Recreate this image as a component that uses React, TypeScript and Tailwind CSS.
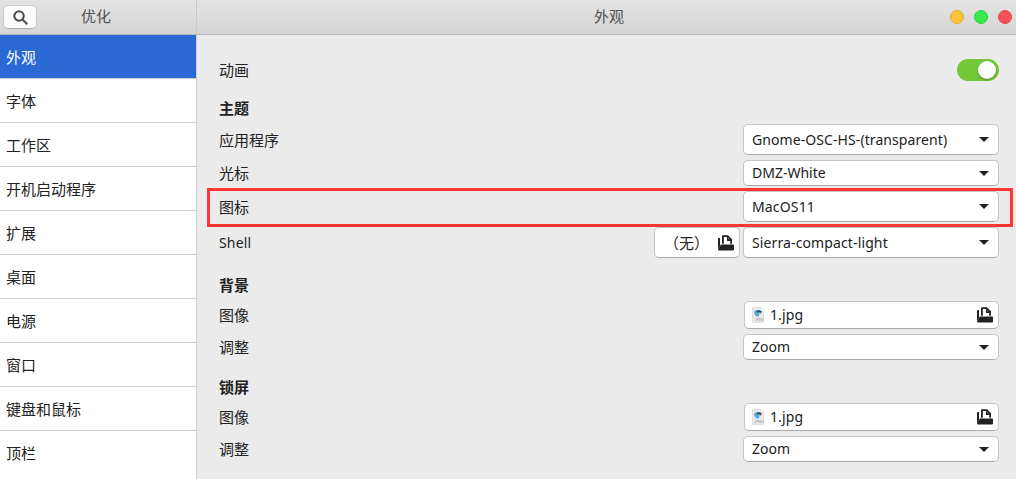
import type { ReactNode } from 'react';

const sidebarItems = ['外观', '字体', '工作区', '开机启动程序', '扩展', '桌面', '电源', '窗口', '键盘和鼠标', '顶栏'];

const boxStyle =
  'flex items-center rounded-[5px] border border-[#c4c4c4] border-b-[#a9a9a9] bg-white leading-none';

function FolderIcon() {
  return (
    <svg className="h-4 w-4 shrink-0" viewBox="0 0 16 16" fill="none">
      <path d="M0 4q0-1 1-1h1v8L0 14Z" fill="#222" />
      <path d="M2.9 9.6h12.3q.8 0 .8.8v4q0 1.1-1.1 1.1H1.1Q0 15.500 0 14.300Z" fill="#222" />
      <path fillRule="evenodd" d="M4 8.800V1.200Q4 .2 5 .2h5l4 4v4.600h-1.800V6H9V2H5.800v6.800Z" fill="#222" />
      <path d="M10 2.200 12 4.300h-2Z" fill="#777" />
    </svg>
  );
}

function JpegIcon() {
  return (
    <svg className="h-4 w-3 shrink-0" viewBox="0 0 12 16">
      <path d="M.5.5h8.7l2.3 2.3v12.7H.5Z" fill="#ebebeb" stroke="#d6d6d6" strokeWidth=".7" />
      <path d="M9 0v3h3" fill="#fff" stroke="#ddd" strokeWidth=".5" />
      <path d="M2 4.5 5 3l4.8 1.4-.5 2.4-2 .5-.7 2.5-2.200-.6-2-2Z" fill="#53a9df" />
      <path d="m4.500 3.700 3.400-.4 2 1.400-1.200 1.200-2.200-.7-1.500.3Z" fill="#234b66" />
      <path d="M6.600 5.500h2v1.200h-2Z" fill="#f1c34e" />
      <text x="2.8" y="13.6" fontSize="3.4" fontWeight="700" fill="#aaa" fontFamily="Liberation Sans, sans-serif">JPEG</text>
    </svg>
  );
}

function Select({ value, height, spacing = '' }: { value: string; height: string; spacing?: string }) {
  return (
    <button className={`${boxStyle} ${height} w-64 justify-between pl-2 pr-[9px] text-left`}>
      <span className={`whitespace-nowrap text-[14px] ${spacing}`}>{value}</span>
      <svg className="h-[5px] w-[10px]" viewBox="0 0 10 5">
        <path d="M0 0h10L5 5Z" fill="#222" />
      </svg>
    </button>
  );
}

function FilePicker() {
  return (
    <button className={`${boxStyle} h-7 w-[255px] pl-[7px] pr-[5px]`}>
      <JpegIcon />
      <span className="ml-[6px] flex-1 text-left text-[14px] tracking-[0.1px]">1.jpg</span>
      <FolderIcon />
    </button>
  );
}

function Row({ label, children, className = '', labelClass = '' }: { label: string; children?: ReactNode; className?: string; labelClass?: string }) {
  return (
    <div className={`flex items-center justify-between ${className}`}>
      <span className={labelClass}>{label}</span>
      {children}
    </div>
  );
}

function Heading({ label, className }: { label: string; className: string }) {
  return <h2 className={`flex h-6 items-center font-bold ${className}`}>{label}</h2>;
}

export default function App() {
  return (
    <div className="flex h-[479px] w-[1016px] flex-col overflow-hidden bg-[#ebebeb] font-['Noto_Sans','Noto_Sans_CJK_SC',sans-serif] text-[15px] leading-none text-[#222]">
      <header className="flex h-[35px] shrink-0 border-b border-[#b5b5b5] bg-linear-to-b from-[#e4e4e4] to-[#d5d5d5] text-[#505050]">
        <div className="flex w-[197px] items-center border-r border-[#cacad0] pl-[3px]">
          <button className="flex h-6 w-[34px] items-center justify-center rounded-[5px] border border-[#c9c9c9] border-b-[#aaa] bg-[#fbfbfb]">
            <svg className="h-[15px] w-[15px]" viewBox="0 0 15 15" fill="none" stroke="#505050" strokeWidth="2.1">
              <circle cx="6" cy="6" r="4.7" />
              <path d="m9.3 9.3 5 5" />
            </svg>
          </button>
          <span className="ml-11 pb-[2px]">优化</span>
        </div>
        <div className="flex flex-1 items-center pr-[4px]">
          <span className="ml-[397px] flex-1 pb-[2px]">外观</span>
          <div className="flex gap-[10px]">
            <i className="h-[14px] w-[14px] rounded-full border border-[#e5ad2d] bg-[#fcc438]" />
            <i className="h-[14px] w-[14px] rounded-full border border-[#2bd33f] bg-[#38ea4c]" />
            <i className="h-[14px] w-[14px] rounded-full border border-[#dc464c] bg-[#f75158]" />
          </div>
        </div>
      </header>
      <div className="flex min-h-0 flex-1">
        <nav className="w-[197px] shrink-0 overflow-hidden border-r border-[#cdcdcd] bg-white">
          {sidebarItems.map((item, index) => (
            <div
              key={item}
              className={`flex h-11 items-center border-b border-[#cfcfcf] pl-[6px] pt-[2px] last:border-white ${index === 0 ? 'bg-[#2a69d3] text-white' : ''}`}
            >
              {item}
            </div>
          ))}
        </nav>
        <main className="relative flex-1 pl-[22px] pr-[17px] pt-[23px]">
          <Row label="动画" className="h-6">
            <div className="flex h-[22px] w-[42px] items-center justify-end rounded-full bg-[#72c837] pr-[3px]">
              <i className="h-[18px] w-[18px] rounded-full bg-white shadow-[0_1px_2px_rgba(0,0,0,0.35)]" />
            </div>
          </Row>
          <Heading label="主题" className="mt-[14px]" />
          <div className="mt-1 flex flex-col gap-[5px]">
            <Row label="应用程序" labelClass="pt-[2px]"><Select value="Gnome-OSC-HS-(transparent)" height="h-[31px]" spacing="tracking-[0.08px]" /></Row>
            <Row label="光标"><Select value="DMZ-White" height="h-[26px]" /></Row>
            <Row label="图标" labelClass="pt-[2px]"><Select value="MacOS11" height="h-[31px]" spacing="tracking-[0.15px]" /></Row>
            <Row label="Shell" labelClass="text-[14px] tracking-[0.15px]">
              <div className="flex gap-[3px]">
                <button className={`${boxStyle} h-[31px] w-[86px] justify-between pl-[9px] pr-[5px]`}>
                  <span className="whitespace-nowrap pt-[2px]">（无）</span>
                  <FolderIcon />
                </button>
                <Select value="Sierra-compact-light" height="h-[31px]" spacing="tracking-[0.12px]" />
              </div>
            </Row>
          </div>
          <Heading label="背景" className="mt-[15px]" />
          <div className="mt-1 flex flex-col gap-[5px]">
            <Row label="图像"><FilePicker /></Row>
            <Row label="调整"><Select value="Zoom" height="h-[26px]" /></Row>
          </div>
          <Heading label="锁屏" className="mt-[15px]" />
          <div className="mt-1 flex flex-col gap-[5px]">
            <Row label="图像"><FilePicker /></Row>
            <Row label="调整"><Select value="Zoom" height="h-[26px]" /></Row>
          </div>
          <div className="pointer-events-none absolute left-[10px] top-[153px] h-[39px] w-[806px] border-[3px] border-[#ff3634]" />
        </main>
      </div>
    </div>
  );
}
